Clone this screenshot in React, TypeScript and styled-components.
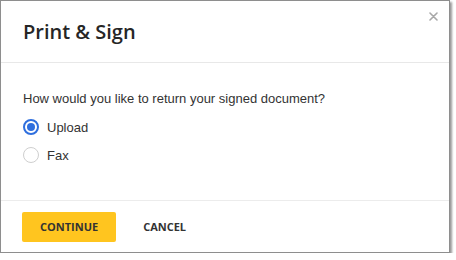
import React, { useState } from 'react';
import styled, { createGlobalStyle } from 'styled-components';

const GlobalStyle = createGlobalStyle`
  html, body {
    margin: 0;
    padding: 0;
    background: #fff;
  }
`;

const Frame = styled.div`
  position: relative;
  width: 450px;
  height: 253px;
  box-sizing: border-box;
  border: 1px solid #8e8e8e;
  box-shadow: 2px 2px 2px rgba(0, 0, 0, 0.4);
  background: #fff;
  display: flex;
  flex-direction: column;
`;

const Header = styled.div`
  height: 61px;
  display: flex;
  align-items: center;
  padding: 0 22px;
  border-bottom: 1px solid #e8e8e8;
`;

const Title = styled.h1`
  margin: 0;
  font-family: 'Open Sans', sans-serif;
  font-size: 20px;
  font-weight: 600;
  color: #262626;
  letter-spacing: 0;
`;

const CloseButton = styled.button`
  position: absolute;
  top: 9px;
  right: 10px;
  border: 0;
  padding: 0;
  background: transparent;
  width: 12px;
  height: 12px;
  display: flex;
  align-items: center;
  justify-content: center;
  cursor: pointer;
`;

const Body = styled.div`
  flex: 1;
  padding: 28px 22px 0;
`;

const Question = styled.p`
  margin: 0 0 13px;
  font-family: 'Liberation Sans', Arial, sans-serif;
  font-size: 13px;
  line-height: 15px;
  color: #333;
`;

const Options = styled.div`
  display: flex;
  flex-direction: column;
  gap: 12px;
`;

const Option = styled.label`
  display: flex;
  align-items: center;
  gap: 8px;
  font-family: 'Liberation Sans', Arial, sans-serif;
  font-size: 13px;
  color: #333;
  cursor: pointer;
`;

const Radio = styled.span<{ $checked: boolean }>`
  width: 16px;
  height: 16px;
  box-sizing: border-box;
  border-radius: 50%;
  border: ${p => (p.$checked ? '2px solid #2f6fde' : '1px solid #cfcfcf')};
  display: flex;
  align-items: center;
  justify-content: center;
  &::after {
    content: '';
    width: 8px;
    height: 8px;
    border-radius: 50%;
    background: ${p => (p.$checked ? '#2f6fde' : 'transparent')};
  }
`;

const Footer = styled.div`
  height: 51px;
  border-top: 1px solid #ececec;
  display: flex;
  align-items: center;
  gap: 7px;
  padding: 0 21px;
`;

const Button = styled.button<{ $primary?: boolean }>`
  height: 30px;
  min-width: ${p => (p.$primary ? '94px' : '0')};
  padding: 0 ${p => (p.$primary ? '18px' : '20px')};
  border: 0;
  border-radius: 2px;
  background: ${p => (p.$primary ? '#ffc51f' : 'transparent')};
  font-family: 'Open Sans', sans-serif;
  font-weight: 700;
  font-size: 11px;
  letter-spacing: 0;
  color: #333;
  cursor: pointer;
`;

const App = () => {
  const [method, setMethod] = useState('upload');

  return (
    <>
      <GlobalStyle />
      <Frame>
        <Header>
          <Title>Print &amp; Sign</Title>
        </Header>
        <CloseButton aria-label="Close">
          <svg width="9" height="9" viewBox="0 0 9 9">
            <path d="M1 1L8 8M8 1L1 8" stroke="#a8a8a8" strokeWidth="1.6" strokeLinecap="round" />
          </svg>
        </CloseButton>
        <Body>
          <Question>How would you like to return your signed document?</Question>
          <Options>
            <Option onClick={() => setMethod('upload')}>
              <Radio $checked={method === 'upload'} />
              Upload
            </Option>
            <Option onClick={() => setMethod('fax')}>
              <Radio $checked={method === 'fax'} />
              Fax
            </Option>
          </Options>
        </Body>
        <Footer>
          <Button $primary>CONTINUE</Button>
          <Button>CANCEL</Button>
        </Footer>
      </Frame>
    </>
  );
};

export default App;
